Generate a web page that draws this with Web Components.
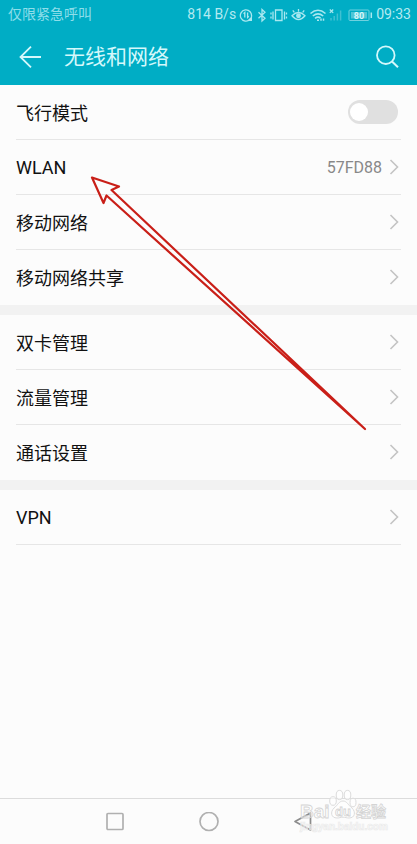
<!DOCTYPE html>
<html lang="zh-CN">
<head>
<meta charset="utf-8">
<meta name="viewport" content="width=device-width, initial-scale=1">
<title>无线和网络</title>
<style>
html, body { margin: 0; height: 100%; }
body { background: #fcfcfc; font-family: Roboto, "Noto Sans CJK SC", sans-serif; color: #111; }
</style>
</head>
<body>
<settings-screen></settings-screen>

<template id="t-screen">
<style>
:host { display: flex; flex-direction: column; min-height: 100vh; position: relative; }
header { background: #00adc5; }
main { flex: 1; display: flex; flex-direction: column; }
</style>
<header>
  <status-bar></status-bar>
  <title-bar>无线和网络</title-bar>
</header>
<main>
  <settings-group>
    <switch-row label="飞行模式"></switch-row>
    <link-row>WLAN<span slot="value">57FD88</span></link-row>
    <link-row>移动网络</link-row>
    <link-row last>移动网络共享</link-row>
  </settings-group>
  <settings-group>
    <link-row>双卡管理</link-row>
    <link-row>流量管理</link-row>
    <link-row last>通话设置</link-row>
  </settings-group>
  <settings-group>
    <link-row>VPN</link-row>
  </settings-group>
</main>
<nav-bar></nav-bar>
<pointer-arrow></pointer-arrow>
<water-mark></water-mark>
</template>

<template id="t-status">
<style>
:host { display: flex; align-items: center; justify-content: space-between; height: 29px; padding: 0 6px 0 8px; font-size: 14px; line-height: 29px; color: #8edeea; }
.right { display: flex; align-items: center; color: #b4eaf1; }
svg { display: block; fill: none; stroke: #a9e8f0; }
.speed { margin-right: 3px; }
</style>
<span>仅限紧急呼叫</span>
<div class="right">
  <span class="speed">814 B/s</span>
  <svg width="137" height="28" viewBox="239 0 137 28" stroke-width="1.3" aria-hidden="true">
    <path d="M250 18.4A5.6 5.6 0 1 1 251.4 15.800M244.800 16.500V11.500L243.600 12.700M247.600 11.500V16.500L248.800 15.300"/>
    <path d="M247 20l5-5v5z" fill="#a9e8f0" stroke="none"/>
    <path d="M258.500 11.300l6.500 6-3 2.700V8.500l3 2.800-6.500 6"/>
    <path d="M275.500 9h6.500v10.500h-6.500zM273 10.500v8M284.500 10.500v8M271 11.500v2M271 15.500v2M286.500 11.500v2M286.500 15.500v2"/>
    <path d="M292 14.800q6.500-6.500 13 0q-6.500 7.500-13 0zM298.500 10.500V8M294.300 11.300l-1.500-2M302.700 11.300l1.500-2"/>
    <circle cx="298.500" cy="14.800" r="1.800" fill="#a9e8f0"/>
    <path d="M310.500 12.500q7.500-6.500 15 0M312.800 15q5.200-4.300 10.400 0M315 17.300q3-2.400 5.500-.2" stroke-width="1.600"/>
    <path d="M317 19.300h2M321 17.500v2.300M323.500 17.500v2.300" stroke-width="1.500"/>
    <path d="M329.800 8.500l3.400 3.400M333.200 8.500l-3.400 3.400"/>
    <path d="M331 17v2.500M334.200 15v4.500M337.400 12.500v7M340.600 9.500v10" stroke="#40c0d2" stroke-width="1.500"/>
    <rect x="349" y="9" width="20" height="10.500" rx="1" stroke="#6fd1df" stroke-width="1"/>
    <rect x="351" y="11" width="16" height="6.500" fill="#50c5d5" stroke="none"/>
    <path d="M371.300 11.500v5.500" stroke-width="1.500"/>
    <text x="359" y="17.500" text-anchor="middle" font-size="9" font-weight="700" font-family="Roboto, sans-serif" fill="#d8f7fa" stroke="none">80</text>
  </svg>
  <span>09:33</span>
</div>
</template>

<template id="t-title">
<style>
:host { display: flex; align-items: center; height: 56px; padding: 0 17px; color: #d4f8fb; }
h1 { flex: 1; margin: 0 0 0 21px; font-size: 21px; line-height: 32px; font-weight: 400; }
button { display: flex; padding: 0; border: 0; background: none; color: inherit; }
svg { fill: none; stroke: currentColor; stroke-width: 1.800; }
</style>
<button aria-label="返回"><svg width="26" height="26" viewBox="0 0 26 26"><path d="M24 13H3.500M14 2.700L3.500 13L14 23.300"/></svg></button>
<h1><slot></slot></h1>
<button aria-label="搜索"><svg width="26" height="26" viewBox="0 0 26 26"><circle cx="11.800" cy="11.200" r="8.800"/><path d="M18 17.500l6 5.800" stroke-width="2"/></svg></button>
</template>

<template id="t-group">
<style>
:host { display: block; }
:host(:not(:first-child)) { border-top: 10px solid #f2f2f2; }
</style>
<slot></slot>
</template>

<template id="t-link">
<style>
:host { display: block; padding: 0 16px; }
a { display: flex; align-items: center; box-sizing: border-box; height: 55px; border-bottom: 1px solid #e6e6e6; color: inherit; text-decoration: none; font-size: 18px; }
:host([last]) a { border-color: transparent; }
.label { flex: 1; }
.value { color: #888; font-size: 16px; margin-right: 7px; }
svg { fill: none; stroke: #c4c4c4; stroke-width: 1.600; }
</style>
<a href="#"><span class="label"><slot></slot></span><span class="value"><slot name="value"></slot></span>
<svg width="12" height="16" viewBox="0 0 12 16" aria-hidden="true"><path d="M1.500 1l7 7-7 7"/></svg></a>
</template>

<template id="t-switch">
<style>
:host { display: block; padding: 0 16px; }
label { display: flex; align-items: center; justify-content: space-between; box-sizing: border-box; height: 55px; padding-right: 3px; border-bottom: 1px solid #e6e6e6; font-size: 18px; }
input { appearance: none; display: flex; align-items: center; box-sizing: border-box; width: 50px; height: 24px; margin: 0; padding: 0 2px; border-radius: 12px; background: #e0e0e0; }
input::before { content: ""; width: 18px; height: 18px; border-radius: 50%; background: #fff; }
input:checked { justify-content: flex-end; background: #00adc5; }
</style>
<label><span></span><input type="checkbox" role="switch"></label>
</template>

<template id="t-nav">
<style>
:host { display: flex; align-items: center; box-sizing: border-box; height: 46px; border-top: 1px solid #dcdcdc; }
button { display: flex; padding: 0; border: 0; background: none; }
svg { fill: none; stroke: #b0b0b0; stroke-width: 1.700; }
nav { display: flex; flex: 1; justify-content: center; gap: 74px; }
</style>
<nav>
<button aria-label="最近任务"><svg width="20" height="20" viewBox="0 0 20 20"><rect x="2" y="1.500" width="16" height="16" rx="1"/></svg></button>
<button aria-label="主屏幕"><svg width="20" height="20" viewBox="0 0 20 20"><circle cx="10" cy="9.500" r="9"/></svg></button>
<button aria-label="后退"><svg width="20" height="20" viewBox="0 0 20 20"><path d="M17.500 1v17L2 9.500z" stroke="#8c8c8c" stroke-linejoin="round"/></svg></button>
</nav>
</template>

<template id="t-arrow">
<style>
:host { position: absolute; left: 0; top: 0; pointer-events: none; }
svg { display: block; fill: none; stroke: #c91f18; stroke-width: 2.200; stroke-linejoin: round; }
</style>
<svg width="380" height="440" viewBox="0 0 380 440" aria-hidden="true"><path d="M92 177.500L119 186.500L111.500 190L365 429L106.500 195.500L103.500 203Z"/></svg>
</template>

<template id="t-mark">
<style>
:host { position: absolute; right: 28px; bottom: 8px; pointer-events: none; }
svg { display: block; }
text { font-family: "Liberation Sans", "Noto Sans CJK SC", sans-serif; font-weight: 700; fill: #fff; fill-opacity: .4; stroke: #d4d4d4; stroke-width: .8; }
path, ellipse { fill: #fff; fill-opacity: .6; stroke: #dcdcdc; stroke-width: 1; }
.url { stroke: #ebebeb; stroke-width: .7; }
</style>
<svg width="90" height="48" viewBox="299 788 90 48" aria-hidden="true">
<text x="300" y="818" font-size="19">Bai</text>
<ellipse cx="333" cy="801" rx="3.300" ry="4.300"/><ellipse cx="339.500" cy="795" rx="3.300" ry="4.600"/>
<ellipse cx="347.500" cy="795" rx="3.300" ry="4.600"/><ellipse cx="353" cy="802.500" rx="3" ry="4.300"/>
<path d="M343 801c-4 0-5 4-9 7-4 4-3 10 3 10 3 0 3-.8 6-.8s3 .8 6 .8c6 0 7-6 3-10-4-3-5-7-9-7z"/>
<text x="335" y="816" font-size="13">du</text>
<text x="356" y="817" font-size="15">经验</text>
<text class="url" x="300" y="830" font-size="10">jingyan.baidu.com</text>
</svg>
</template>

<script>
const define = (name, id, setup) => customElements.define(name, class extends HTMLElement {
  constructor() {
    super();
    this.attachShadow({ mode: 'open' }).append(document.getElementById(id).content.cloneNode(true));
  }
  connectedCallback() { if (setup) setup(this); }
});
define('status-bar', 't-status');
define('title-bar', 't-title');
define('settings-group', 't-group');
define('link-row', 't-link');
define('switch-row', 't-switch', el => {
  el.shadowRoot.querySelector('span').textContent = el.getAttribute('label');
});
define('nav-bar', 't-nav');
define('pointer-arrow', 't-arrow');
define('water-mark', 't-mark');
define('settings-screen', 't-screen');
</script>
</body>
</html>
